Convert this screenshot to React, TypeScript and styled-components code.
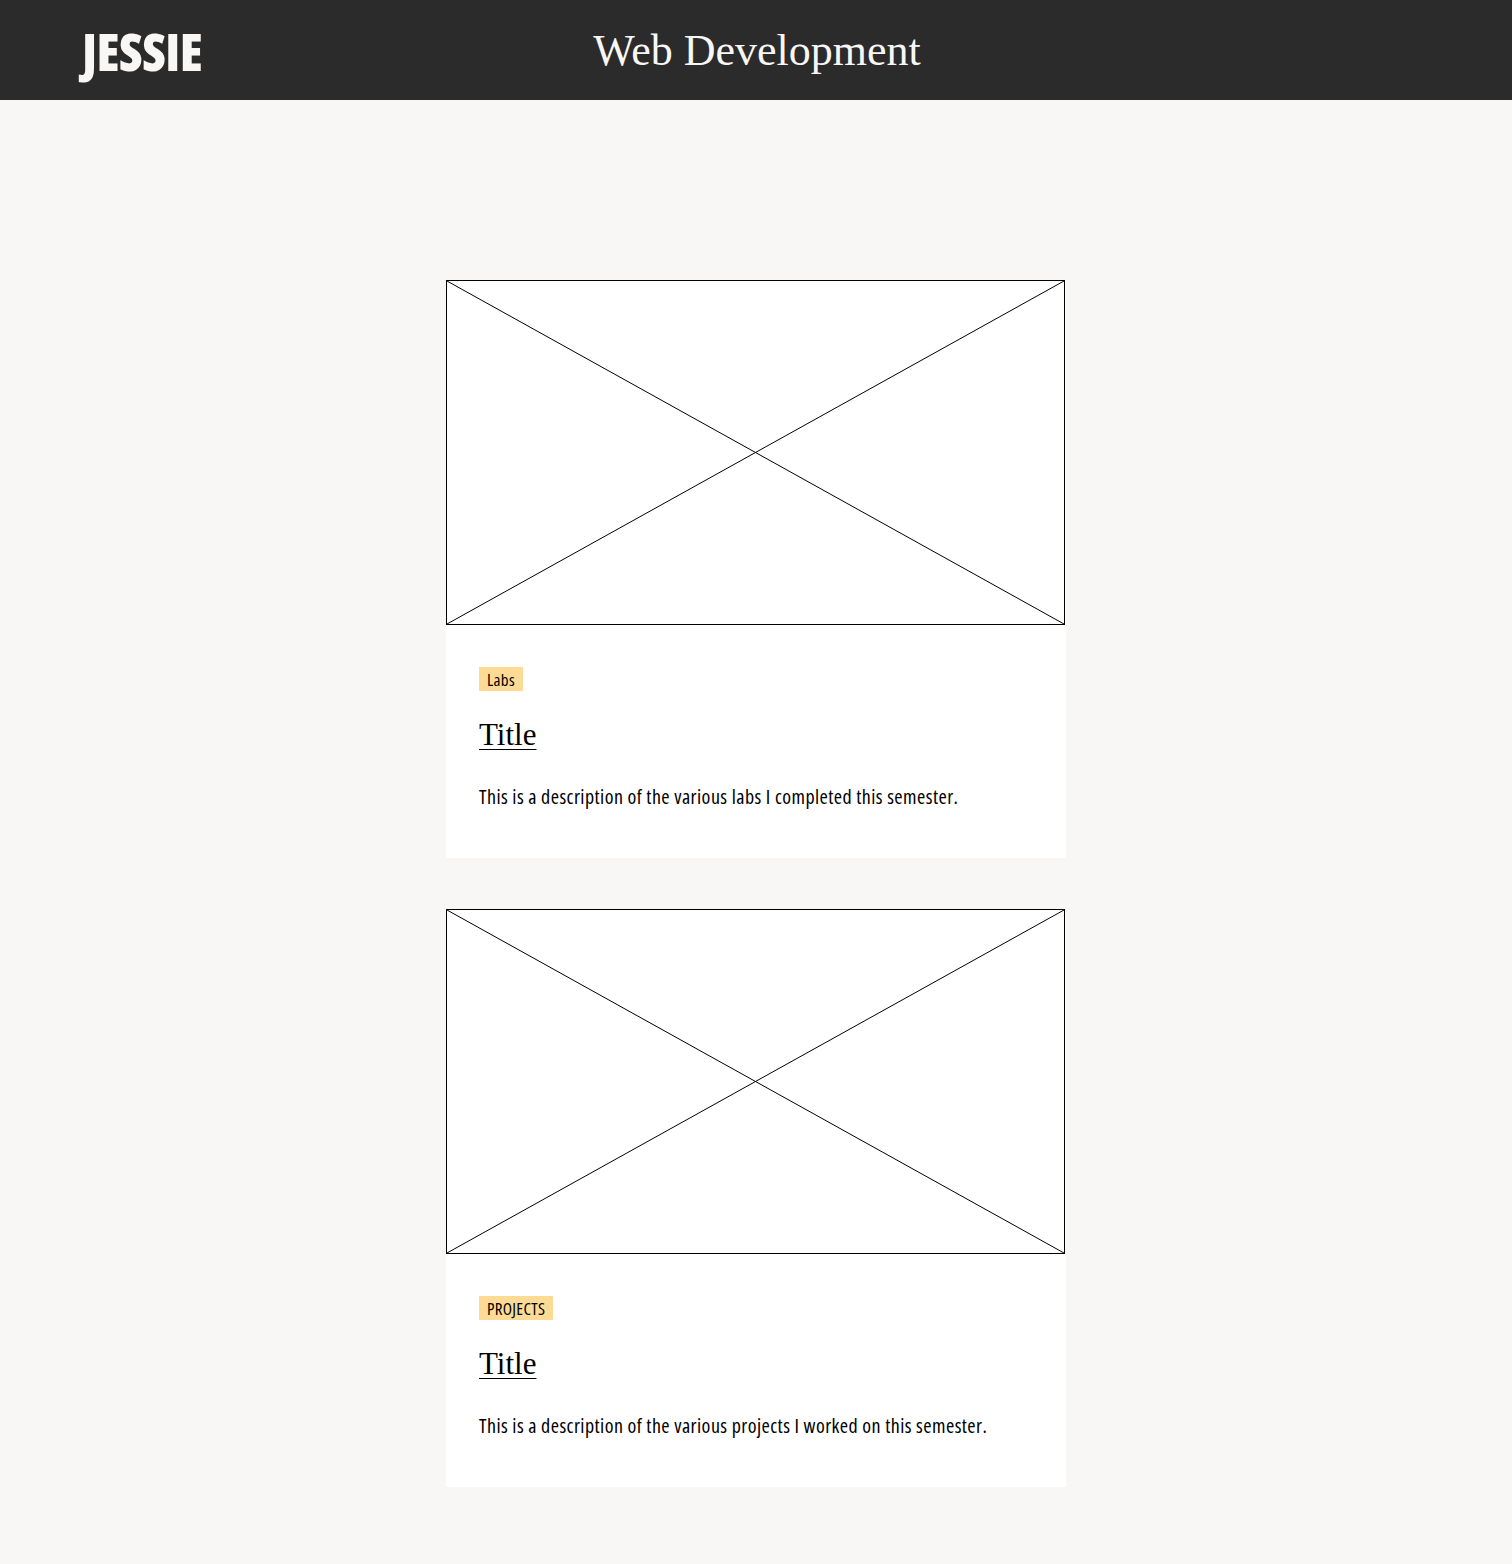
import React from "react";
import styled, { createGlobalStyle } from "styled-components";

const Global = createGlobalStyle`
  html, body { margin: 0; padding: 0; background: #f8f7f5; }
  * { box-sizing: border-box; }
`;

const condensed = `"Open Sans", "DejaVu Sans Condensed", sans-serif`;
const serif = `"Liberation Serif", "DejaVu Serif", serif`;

const Header = styled.header`
  height: 100px;
  background: #2b2b2b;
  display: grid;
  grid-template-columns: 1fr auto 1fr;
  align-items: center;
  padding: 0 80px 0 82px;
`;

const Logo = styled.div`
  font-family: ${condensed};
  font-stretch: 75%;
  font-variation-settings: "wdth" 75;
  font-weight: 800;
  font-size: 52px;
  letter-spacing: -0.5px;
  color: #f8f7f5;
`;

const PageTitle = styled.h1`
  margin: 0;
  font-family: ${serif};
  font-weight: 400;
  font-size: 44px;
  color: #f8f7f5;
`;

const Main = styled.main`
  display: flex;
  flex-direction: column;
  align-items: center;
  gap: 51px;
  padding: 180px 0 77px;
`;

const Card = styled.article`
  width: 620px;
  background: #ffffff;
  display: flex;
  flex-direction: column;
`;

const Placeholder = styled.svg`
  display: block;
  width: 619px;
  height: 345px;
  border: 1px solid #000;
  background: #fff;
`;

const Body = styled.div`
  padding: 42px 33px 47px;
  display: flex;
  flex-direction: column;
  align-items: flex-start;
`;

const Tag = styled.span`
  background: #fddb95;
  height: 24px;
  padding: 0 8px;
  display: inline-flex;
  align-items: center;
  font-family: ${condensed};
  font-stretch: 80%;
  font-variation-settings: "wdth" 80;
  font-size: 17px;
  letter-spacing: 0.3px;
  color: #000;
`;

const Title = styled.a`
  margin-top: 26px;
  font-family: ${serif};
  font-size: 31px;
  color: #000;
  text-decoration: underline;
  text-decoration-thickness: 1px;
  text-underline-offset: 4px;
  line-height: 36px;
`;

const Desc = styled.p`
  margin: 30px 0 0;
  font-family: ${condensed};
  font-stretch: 80%;
  font-variation-settings: "wdth" 80;
  font-size: 20px;
  letter-spacing: 0.45px;
  line-height: 28px;
  color: #000;
`;

const ImageBox = () => (
  <Placeholder viewBox="0 0 617 343" preserveAspectRatio="none">
    <line x1="0" y1="0" x2="617" y2="343" stroke="#000" strokeWidth="1" />
    <line x1="617" y1="0" x2="0" y2="343" stroke="#000" strokeWidth="1" />
  </Placeholder>
);

const cards = [
  { tag: "Labs", desc: "This is a description of the various labs I completed this semester." },
  { tag: "PROJECTS", desc: "This is a description of the various projects I worked on this semester." },
];

export default function App() {
  return (
    <>
      <Global />
      <Header>
        <Logo>JESSIE</Logo>
        <PageTitle>Web Development</PageTitle>
        <div />
      </Header>
      <Main>
        {cards.map((c) => (
          <Card key={c.tag}>
            <ImageBox />
            <Body>
              <Tag>{c.tag}</Tag>
              <Title href="#">Title</Title>
              <Desc>{c.desc}</Desc>
            </Body>
          </Card>
        ))}
      </Main>
    </>
  );
}
